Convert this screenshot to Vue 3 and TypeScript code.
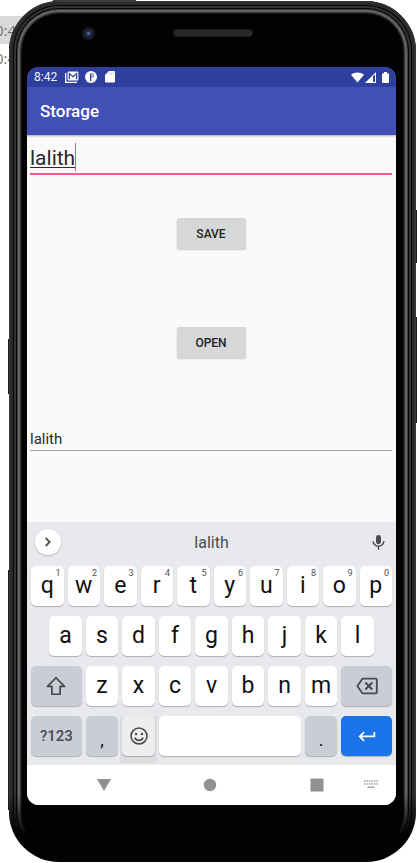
<script setup lang="ts">
import { ref } from 'vue'

interface Key {
  label: string
  hint?: string
}

const draft = ref<string>('lalith')
const stored = ref<string>('lalith')

const topRow: Key[] = 'qwertyuiop'.split('').map((label, i) => ({ label, hint: String((i + 1) % 10) }))
const homeRow: Key[] = 'asdfghjkl'.split('').map((label) => ({ label }))
const bottomRow: Key[] = 'zxcvbnm'.split('').map((label) => ({ label }))

function press(label: string): void {
  draft.value += label
}

function erase(): void {
  draft.value = draft.value.slice(0, -1)
}

function save(): void {
  stored.value = draft.value
}

function open(): void {
  draft.value = stored.value
}
</script>

<template>
  <div class="stage">
    <div class="backdrop" aria-hidden="true">
      <span class="stamp selected">0:41</span>
      <span class="stamp">0:41</span>
    </div>
    <i class="edge"></i>
    <i class="side left-a"></i>
    <i class="side left-b"></i>
    <i class="side right-a"></i>
    <i class="side right-b"></i>

    <main class="phone">
      <div class="bezel">
        <span class="camera"></span>
        <span class="speaker"></span>
      </div>

      <div class="screen">
        <header>
          <div class="status">
            <span class="clock">8:42</span>
            <svg class="s-mail" viewBox="0 0 14 12" aria-hidden="true">
              <path d="M.7 2v9.3H12" fill="none" stroke="#fff" stroke-width="1.3" />
              <rect x="2.6" y=".6" width="10.8" height="8.8" rx=".8" fill="#fff" />
              <path d="M4.4 8.2V2.6L8 5.6l3.6-3v5.6" fill="none" stroke="#2e3f9e" stroke-width="1.2" />
            </svg>
            <svg class="s-round" viewBox="0 0 12 12" aria-hidden="true">
              <circle cx="6" cy="6" r="6" fill="#fff" />
              <path d="M5 2.500h3.500v3.700H6.300V10H5z" fill="#2e3f9e" />
              <path d="M6.300 3.200h1.500v2.200H6.300z" fill="#fff" />
            </svg>
            <svg class="s-card" viewBox="0 0 10 12" aria-hidden="true">
              <path d="M3.800 0H9a1 1 0 0 1 1 1v9.500a1 1 0 0 1-1 1H1a1 1 0 0 1-1-1V4z" fill="#fff" />
              <path d="M4.200 1.500v2M6.200 1.500v2M8.200 1.500v2" stroke="#a9b1dc" stroke-width=".8" />
            </svg>
            <span class="spacer"></span>
            <svg class="s-wifi" viewBox="0 0 14 11" aria-hidden="true">
              <path d="M7 11 0 2.600C4 -.7 10-.7 14 2.600z" fill="#fff" />
            </svg>
            <svg class="s-cell" viewBox="0 0 11 11" aria-hidden="true">
              <path d="M0 11 11 0v11z" fill="#fff" />
              <path d="M8 4.500 10 2.500V10H8z" fill="#2e3f9e" />
            </svg>
            <svg class="s-batt" viewBox="0 0 7 11" aria-hidden="true">
              <path d="M2 0h3v1.200h1a1 1 0 0 1 1 1V10a1 1 0 0 1-1 1H1a1 1 0 0 1-1-1V2.200a1 1 0 0 1 1-1h1z" fill="#fff" />
            </svg>
          </div>
          <h1>Storage</h1>
        </header>

        <section class="content">
          <div class="field focused">
            <input v-model="draft" type="text" aria-label="Text to save" />
            <i class="caret"></i>
          </div>
          <button class="raised" type="button" @click="save">SAVE</button>
          <button class="raised second" type="button" @click="open">OPEN</button>
          <div class="field result">
            <input v-model="stored" type="text" aria-label="Saved text" />
          </div>
        </section>

        <section class="keyboard">
          <div class="strip">
            <button class="expand" type="button" aria-label="More">
              <svg viewBox="0 0 24 24" aria-hidden="true"><path d="m8.500 6 6 6-6 6" fill="none" stroke="#505356" stroke-width="2.800" /></svg>
            </button>
            <button class="suggestion" type="button">lalith</button>
            <button class="mic" type="button" aria-label="Voice input">
              <svg viewBox="0 0 24 24" aria-hidden="true">
                <path d="M12 15a3.500 3.500 0 0 0 3.500-3.500v-6a3.500 3.500 0 0 0-7 0v6A3.500 3.500 0 0 0 12 15zm6.500-4c0 3.600-3 5.900-6.500 5.900S5.500 14.600 5.500 11h-2c0 4 3.200 7.200 7.500 7.800V23h2v-4.200c4.300-.6 7.500-3.800 7.500-7.800z" fill="#484a4d" />
              </svg>
            </button>
          </div>

          <div class="row">
            <button v-for="k in topRow" :key="k.label" class="key" type="button" @click="press(k.label)">
              {{ k.label }}<small>{{ k.hint }}</small>
            </button>
          </div>
          <div class="row home">
            <button v-for="k in homeRow" :key="k.label" class="key" type="button" @click="press(k.label)">{{ k.label }}</button>
          </div>
          <div class="row">
            <button class="key wide tool" type="button" aria-label="Shift">
              <svg class="glyph" viewBox="0 0 24 24" aria-hidden="true">
                <path d="M12 3 2.800 12.500H7.500v8.500h9v-8.500h4.700z" fill="none" stroke="#484a4d" stroke-width="1.900" stroke-linejoin="round" />
              </svg>
            </button>
            <button v-for="k in bottomRow" :key="k.label" class="key" type="button" @click="press(k.label)">{{ k.label }}</button>
            <button class="key wide tool" type="button" aria-label="Backspace" @click="erase">
              <svg class="glyph" viewBox="0 0 24 24" aria-hidden="true">
                <path d="M7 4h14.500a1.200 1.200 0 0 1 1.200 1.200v13.600a1.200 1.200 0 0 1-1.200 1.200H7L1.500 12z" fill="none" stroke="#484a4d" stroke-width="2" stroke-linejoin="round" />
                <path d="m10.200 8.200 7.600 7.600m0-7.600-7.600 7.600" stroke="#484a4d" stroke-width="2.200" />
              </svg>
            </button>
          </div>
          <div class="row last">
            <button class="key wide tool symbols" type="button">?123</button>
            <button class="key tool mark" type="button" @click="press(',')">,</button>
            <div class="pressed">
              <button class="key emoji" type="button" aria-label="Emoji">
                <svg class="glyph" viewBox="0 0 24 24" aria-hidden="true">
                  <circle cx="12" cy="12" r="8.700" fill="none" stroke="#484a4d" stroke-width="1.700" />
                  <circle cx="8.800" cy="9.800" r="1.300" fill="#484a4d" />
                  <circle cx="15.200" cy="9.800" r="1.300" fill="#484a4d" />
                  <path d="M7.500 13.800a4.900 4.900 0 0 0 9 0" fill="none" stroke="#484a4d" stroke-width="1.700" />
                </svg>
              </button>
            </div>
            <button class="key space" type="button" aria-label="Space" @click="press(' ')"></button>
            <button class="key tool mark" type="button" @click="press('.')">.</button>
            <button class="key wide enter" type="button" aria-label="Enter">
              <svg class="glyph" viewBox="0 0 24 24" aria-hidden="true">
                <path d="M20 7.500v5H4.500M8.800 7.700 4 12.500l4.800 4.800" fill="none" stroke="#fff" stroke-width="1.900" />
              </svg>
            </button>
          </div>
        </section>

        <nav>
          <button type="button" aria-label="Back"><svg viewBox="0 0 14 14"><path d="M0 1h14L7 13z" fill="#919191" /></svg></button>
          <button type="button" aria-label="Home"><svg viewBox="0 0 14 14"><circle cx="7" cy="7" r="6.200" fill="#919191" /></svg></button>
          <button type="button" aria-label="Recent apps"><svg viewBox="0 0 14 14"><rect x=".5" y=".5" width="13" height="13" rx=".6" fill="#919191" /></svg></button>
          <button class="ime" type="button" aria-label="Switch keyboard">
            <svg viewBox="0 0 14 14">
              <path d="M0 4h14M0 7h14" stroke="#a6a6a6" stroke-width="1.300" stroke-dasharray="1.600 .88" />
              <path d="M3.500 10.300h7" stroke="#a6a6a6" stroke-width="1.400" />
            </svg>
          </button>
        </nav>
      </div>
    </main>
  </div>
</template>

<style>
body {
  background: #fff;
}
</style>

<style scoped>
* {
  box-sizing: border-box;
}
.stage {
  position: relative;
  padding: 1px 1px 1px 9px;
  overflow: hidden;
  font-family: Roboto, "Liberation Sans", sans-serif;
}
button {
  padding: 0;
  border: 0;
  background: none;
  font: inherit;
  color: inherit;
}
svg {
  display: block;
}
.backdrop {
  position: absolute;
  top: 16px;
  left: -5px;
  width: 50px;
}
.stamp {
  display: block;
  height: 28px;
  font: 15px/28px "Open Sans", sans-serif;
  color: #77737a;
}
.stamp.selected {
  background: #d9d9d9;
}
.edge {
  position: absolute;
  top: 0;
  left: 53px;
  width: 83px;
  height: 2px;
  background: #3c403c;
}
.side {
  position: absolute;
  width: 3px;
  background: #1c1c1c;
}
.left-a {
  left: 8px;
  top: 339px;
  height: 55px;
}
.left-b {
  left: 8px;
  top: 570px;
  height: 240px;
}
.right-a {
  right: 0;
  top: 210px;
  height: 53px;
}
.right-b {
  right: 0;
  top: 317px;
  height: 106px;
}
.phone {
  position: relative;
  padding: 0 20px 57px 18px;
  border-radius: 50px;
  background: #020202;
}
.phone::before {
  content: "";
  position: absolute;
  inset: 0;
  border-radius: 50px;
  pointer-events: none;
  box-shadow:
    inset 0 0 0 1px #3a3c3c,
    inset 0 0 0 4px #292a2a,
    inset 0 0 0 5px #030303,
    inset 0 0 0 7px #333436,
    inset 0 0 0 8px #050505,
    inset 0 0 0 9px #3c3d3f,
    inset 0 0 0 11px #626467,
    inset 0 0 0 12px #333436,
    inset 0 0 0 13px #141414;
  mask-image: linear-gradient(#000 92%, transparent 97%);
}
.bezel {
  position: relative;
  height: 66px;
}
.camera {
  position: absolute;
  top: 26px;
  left: 55px;
  width: 13px;
  height: 13px;
  border: 2px solid #1c1c1f;
  border-radius: 50%;
  background: radial-gradient(circle, #53649b 0 1px, #26335f 2px, #10131f 5px);
}
.speaker {
  position: absolute;
  top: 28px;
  left: 146px;
  width: 80px;
  height: 8px;
  border: 1px solid #1d1d1d;
  border-radius: 4px;
  background: #292929;
}
.screen {
  position: relative;
  overflow: hidden;
  border-radius: 12px;
  background: #fafafa;
}
header {
  position: relative;
  background: #4050b5;
  box-shadow: 0 1px 2px #00000055;
}
.status {
  display: flex;
  align-items: center;
  height: 20px;
  padding: 0 7px;
  background: #2e3f9e;
  color: #f2f3fa;
  font-size: 12px;
}
.clock {
  width: 31px;
}
.spacer {
  flex: 1;
}
.s-mail {
  width: 14px;
  height: 12px;
  margin-right: 6px;
}
.s-round {
  width: 12px;
  height: 12px;
  margin-right: 8px;
}
.s-card {
  width: 10px;
  height: 12px;
}
.s-wifi {
  width: 13px;
  height: 11px;
  margin-right: 1px;
}
.s-cell {
  width: 11px;
  height: 11px;
  margin-right: 6px;
}
.s-batt {
  width: 7px;
  height: 11px;
}
h1 {
  margin: 0;
  padding-left: 13px;
  font-size: 17px;
  font-weight: 500;
  line-height: 48px;
  color: #fff;
}
.content {
  display: flex;
  flex-direction: column;
  align-items: center;
  padding: 6px 4px 71px 3px;
}
.field {
  position: relative;
  width: 100%;
}
.field input {
  display: block;
  width: 100%;
  height: 34px;
  padding: 2px 0 0;
  border: 0;
  border-bottom: 1px solid #a2a2a2;
  outline: 0;
  background: none;
  font: 21px/30px Roboto, sans-serif;
  color: #2a2a2a;
}
.field.focused input {
  border-bottom: 2px solid #f85a88;
  text-decoration: underline;
  text-decoration-thickness: 1px;
  text-underline-offset: 2px;
}
.caret {
  position: absolute;
  top: 2px;
  left: 45px;
  width: 1px;
  height: 28px;
  background: #fb4a80;
}
.result {
  margin-top: 67px;
}
.field.result input {
  height: 26px;
  font-size: 15px;
  line-height: 23px;
}
.raised {
  width: 69px;
  height: 31px;
  margin-top: 43px;
  border-radius: 2px;
  background: #d6d8d7;
  box-shadow: 0 1px 2px #00000033;
  font-size: 12px;
  font-weight: 500;
  color: #222;
}
.raised.second {
  margin-top: 78px;
}
.keyboard {
  padding: 0 2px;
  background: #e8e9ed;
}
.strip {
  display: grid;
  grid-template-columns: 40px 1fr 40px;
  align-items: center;
  height: 44px;
  padding-bottom: 4px;
}
.expand {
  width: 26px;
  height: 26px;
  margin-left: 6px;
  border-radius: 50%;
  background: #fff;
  box-shadow: 0 1px 2px #00000033;
}
.expand svg {
  width: 16px;
  height: 16px;
  margin: 0 auto;
}
.suggestion {
  font-size: 16px;
  color: #4a4c4f;
}
.mic {
  justify-self: end;
  margin-right: 7px;
}
.mic svg {
  width: 17px;
  height: 18px;
}
.row {
  display: grid;
  grid-template-columns: repeat(20, 1fr);
  padding-bottom: 10px;
}
.home .key:first-child {
  grid-column: 2 / span 2;
}
.key {
  position: relative;
  grid-column: span 2;
  height: 40px;
  margin: 0 2px;
  border-radius: 5px;
  background: #fff;
  box-shadow: 0 1px 1px #00000040;
  font-size: 23px;
  line-height: 40px;
  color: #101010;
}
.key small {
  position: absolute;
  top: 2px;
  right: 3px;
  font-size: 9px;
  line-height: 11px;
  color: #505050;
}
.key.wide {
  grid-column: span 3;
}
.key.tool {
  background: #cacdd6;
}
.glyph {
  width: 22px;
  height: 22px;
  margin: 0 auto;
}
.row.last {
  padding-bottom: 0;
  height: 49px;
}
.key.symbols {
  font-size: 15px;
  font-weight: 500;
  color: #484a4d;
}
.key.mark {
  padding-top: 8px;
  font-size: 18px;
  line-height: 32px;
}
.pressed {
  grid-column: span 2;
  display: grid;
  height: 47px;
  background: #dcdde1;
}
.key.emoji {
  background: #eee;
}
.key.space {
  grid-column: span 8;
}
.key.enter {
  background: #1b73e8;
}
nav {
  position: relative;
  display: flex;
  align-items: center;
  justify-content: center;
  height: 40px;
  padding-right: 2px;
  background: #fff;
}
nav button {
  display: grid;
  place-items: center;
  width: 29%;
  height: 38px;
}
nav svg {
  width: 14px;
  height: 14px;
}
nav .ime {
  position: absolute;
  top: 0;
  right: 11px;
  width: 28px;
}
</style>
